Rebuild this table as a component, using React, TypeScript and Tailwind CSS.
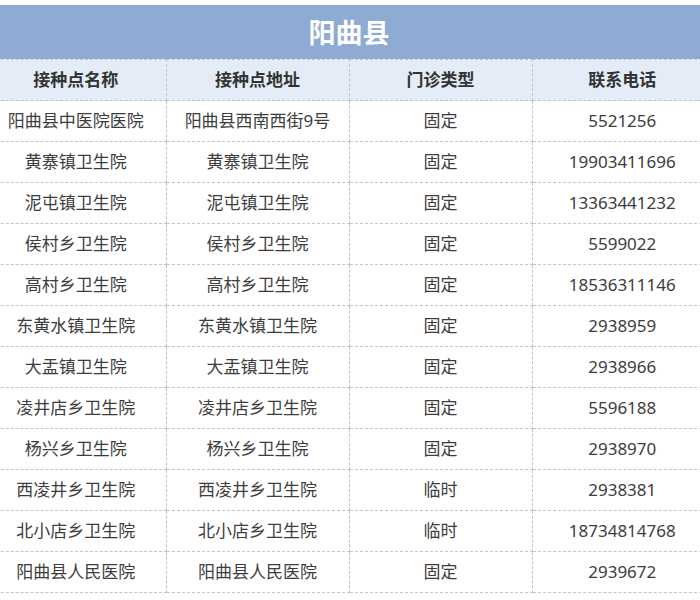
const rows: [string, string, string, string][] = [
  ["阳曲县中医院医院", "阳曲县西南西街9号", "固定", "5521256"],
  ["黄寨镇卫生院", "黄寨镇卫生院", "固定", "19903411696"],
  ["泥屯镇卫生院", "泥屯镇卫生院", "固定", "13363441232"],
  ["侯村乡卫生院", "侯村乡卫生院", "固定", "5599022"],
  ["高村乡卫生院", "高村乡卫生院", "固定", "18536311146"],
  ["东黄水镇卫生院", "东黄水镇卫生院", "固定", "2938959"],
  ["大盂镇卫生院", "大盂镇卫生院", "固定", "2938966"],
  ["凌井店乡卫生院", "凌井店乡卫生院", "固定", "5596188"],
  ["杨兴乡卫生院", "杨兴乡卫生院", "固定", "2938970"],
  ["西凌井乡卫生院", "西凌井乡卫生院", "临时", "2938381"],
  ["北小店乡卫生院", "北小店乡卫生院", "临时", "18734814768"],
  ["阳曲县人民医院", "阳曲县人民医院", "固定", "2939672"],
]

const headers = ["接种点名称", "接种点地址", "门诊类型", "联系电话"]

export default function App() {
  return (
    <div className="w-[700px] h-[600px] overflow-hidden bg-white pt-[5px] font-['Noto_Sans','Noto_Sans_CJK_SC',sans-serif] text-[#3d3d3d]">
      {/* the sheet is wider than the window and cropped on both sides */}
      <div className="w-[726px] -ml-[14px]">
        <div className="h-[54px] bg-[#8eabd3] flex items-center justify-center">
          <h1 className="text-[27px] font-bold text-white leading-none">阳曲县</h1>
        </div>

        <table className="w-full border-collapse table-fixed">
          <colgroup>
            <col className="w-[180px]" />
            <col className="w-[183px]" />
            <col className="w-[183px]" />
            <col className="w-[180px]" />
          </colgroup>
          <thead>
            <tr className="bg-[#e3ecf7] h-[41px]">
              {headers.map((h, i) => (
                <th
                  key={h}
                  className={`p-0 text-[17px] font-bold text-[#333] border-y border-dashed border-[#c4c4c4] ${
                    i < 3 ? "border-r" : ""
                  }`}
                >
                  {h}
                </th>
              ))}
            </tr>
          </thead>
          <tbody>
            {rows.map((r) => (
              <tr key={r[0]} className="h-[41px]">
                {r.map((c, i) => (
                  <td
                    key={i}
                    className={`p-0 text-center text-[17px] whitespace-nowrap border-b border-dashed border-[#c4c4c4] ${
                      i < 3 ? "border-r" : ""
                    }`}
                  >
                    {c}
                  </td>
                ))}
              </tr>
            ))}
          </tbody>
        </table>
      </div>
    </div>
  )
}
